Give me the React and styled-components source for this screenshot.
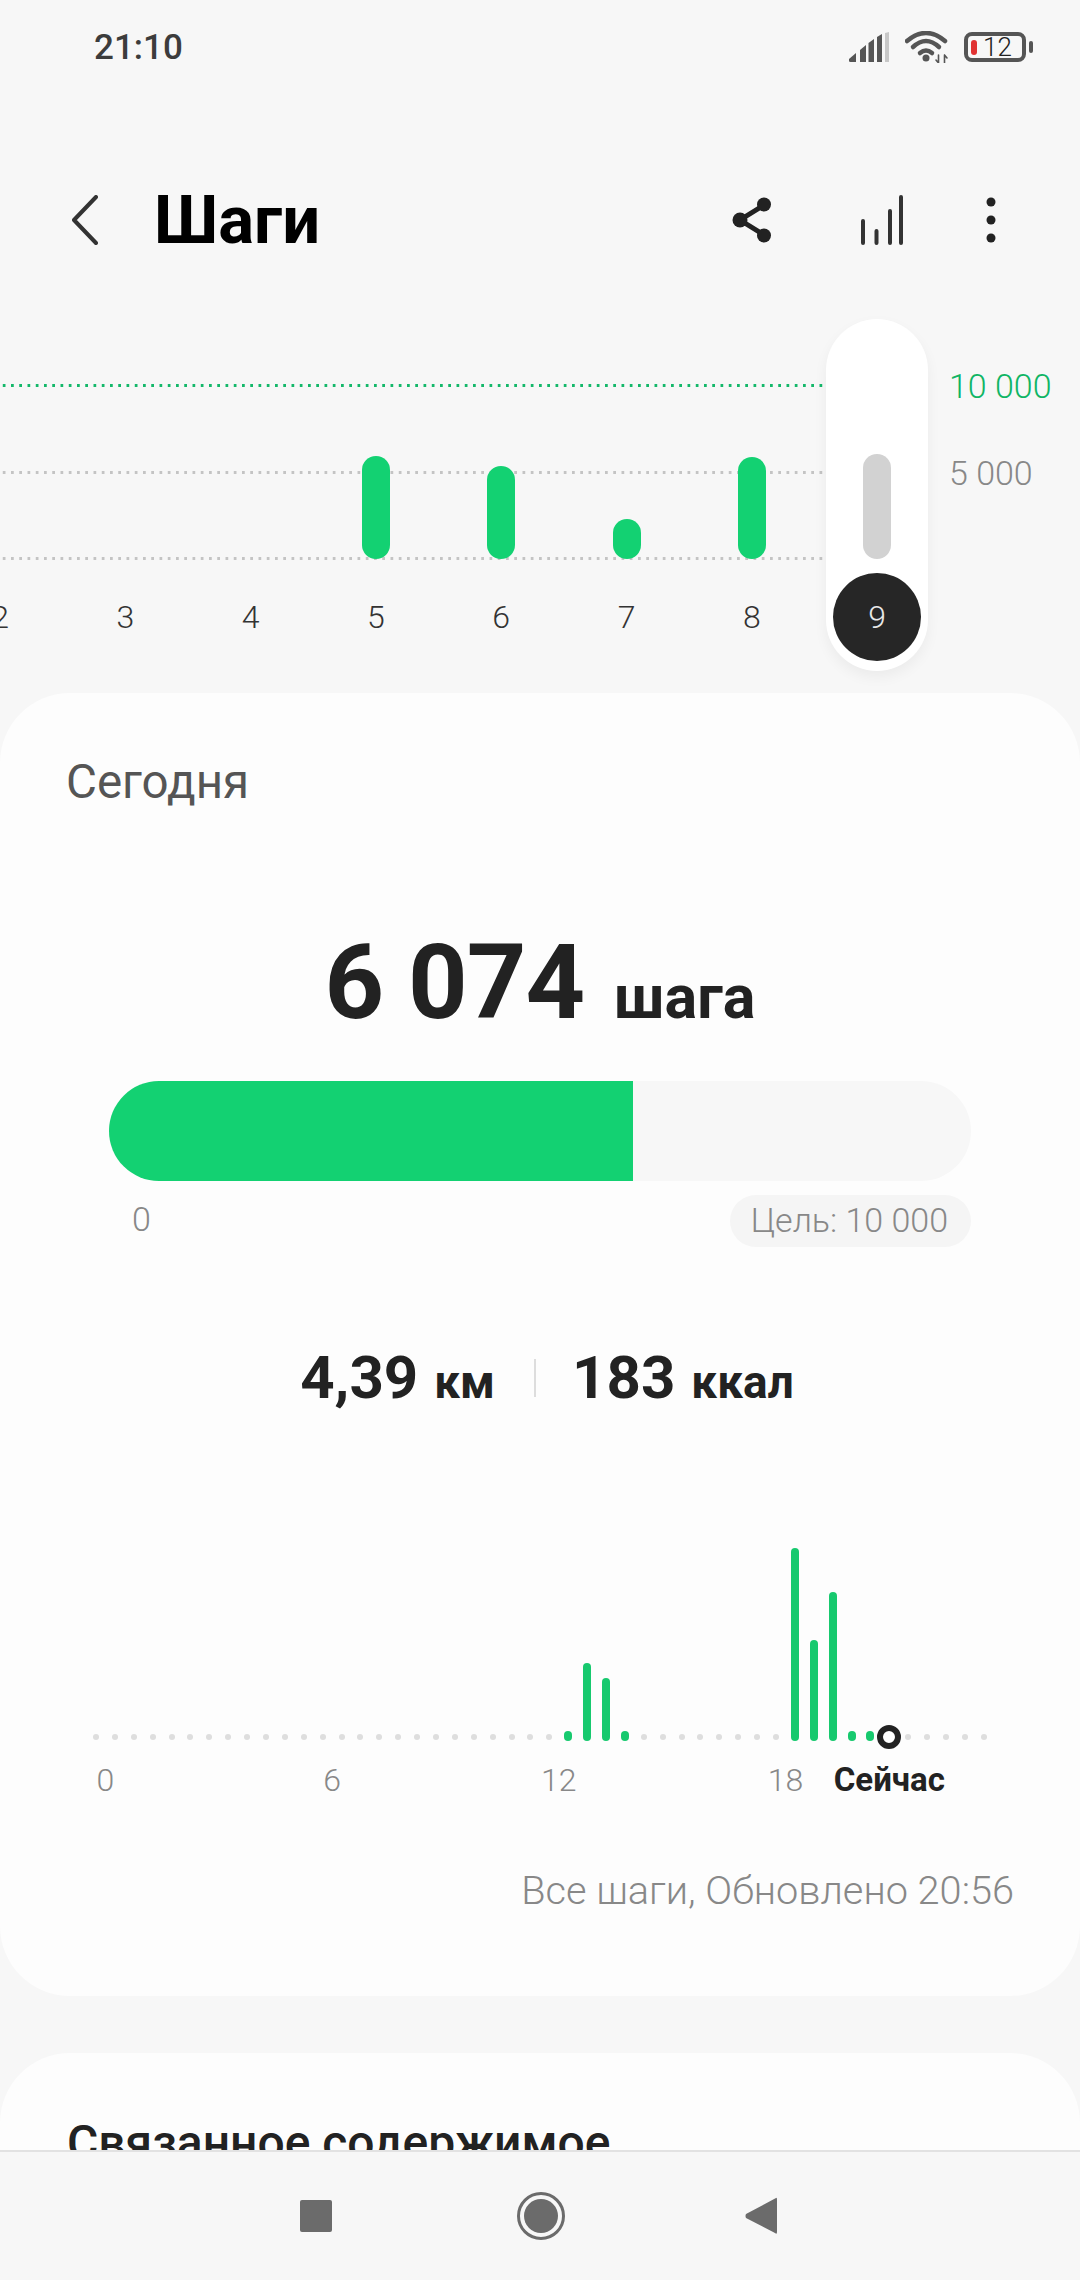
import React from "react";
import styled, { createGlobalStyle } from "styled-components";

const GlobalStyle = createGlobalStyle`
  html, body {
    margin: 0;
    padding: 0;
    background: #f7f7f7;
    font-family: Roboto, "Noto Sans", sans-serif;
  }
  * { box-sizing: border-box; }
`;

const Page = styled.div`
  position: relative;
  width: 1080px;
  height: 2280px;
  overflow: hidden;
  background: #f7f7f7;
  color: #222;
`;

const StatusBar = styled.div`
  height: 94px;
  display: flex;
  align-items: center;
  padding: 0 48px 0 94px;
`;
const Time = styled.div`
  font-size: 35px;
  font-weight: 500;
  color: #3c3c3c;
`;
const StatusIcons = styled.div`
  margin-left: auto;
  display: flex;
  align-items: center;
  gap: 16px;
`;
const Battery = styled.div`
  position: relative;
  width: 62px;
  height: 30px;
  margin-left: -1px;
  border: 4px solid #555;
  border-radius: 8px;
  display: flex;
  align-items: center;
  padding-left: 3px;
  font-size: 26px;
  font-weight: 300;
  line-height: 1;
  color: #222;
  margin-right: 6px;
  &::after {
    content: "";
    position: absolute;
    right: -11px;
    top: 5px;
    width: 4px;
    height: 12px;
    border-radius: 2px;
    background: #555;
  }
`;
const BatteryLevel = styled.span`
  width: 6px;
  height: 15px;
  border-radius: 3px;
  background: #e03232;
  margin-right: 6px;
`;

const Header = styled.div`
  margin-top: 63px;
  height: 126px;
  display: flex;
  align-items: center;
  padding: 0 84px 0 72px;
`;
const Title = styled.h1`
  margin: 0 0 0 56px;
  font-size: 67px;
  font-weight: 700;
  color: #000;
`;
const Actions = styled.div`
  margin-left: auto;
  display: flex;
  align-items: center;
`;
const Action = styled.svg`
  display: block;
  margin-left: ${(p) => p.$gap || 0}px;
`;

const WeekSection = styled.div`
  position: relative;
  height: 410px;
  padding-top: 101px;
`;
const Plot = styled.div`
  display: grid;
  width: 877px;
`;
const GridLines = styled.div`
  grid-area: 1 / 1;
  height: 176px;
  display: flex;
  flex-direction: column;
  justify-content: space-between;
`;
const GridLine = styled.div`
  height: 3px;
  background: radial-gradient(circle at center, ${(p) => (p.$goal ? "#14b86a" : "#c4c4c4")} 1.4px, transparent 1.8px) 0 0 / 8.25px 3px repeat-x;
`;
const Days = styled.div`
  grid-area: 1 / 1;
  display: flex;
  margin-left: -62.6px;
`;
const Day = styled.div`
  width: 125.3px;
  display: flex;
  flex-direction: column;
  align-items: center;
`;
const BarSlot = styled.div`
  height: 175px;
  display: flex;
  align-items: flex-end;
`;
const DayBar = styled.div`
  width: 28px;
  height: ${(p) => p.$h}px;
  border-radius: 14px;
  background: ${(p) => p.$color || "#13d172"};
`;
const DayLabel = styled.div`
  margin-top: 38px;
  font-size: 32px;
  line-height: 40px;
  font-weight: 300;
  color: #333;
`;
const Selected = styled.div`
  position: absolute;
  left: 826px;
  top: 36px;
  width: 102px;
  height: 352px;
  border-radius: 51px;
  background: #fff;
  box-shadow: 0 6px 14px rgba(0, 0, 0, 0.05);
  display: flex;
  flex-direction: column;
  align-items: center;
  justify-content: flex-end;
  padding-bottom: 10px;
`;
const SelectedDay = styled.div`
  width: 88px;
  height: 88px;
  margin-top: 14px;
  border-radius: 50%;
  background: #262626;
  color: #e8e8e8;
  font-size: 32px;
  font-weight: 300;
  display: flex;
  align-items: center;
  justify-content: center;
`;
const Legend = styled.div`
  position: absolute;
  left: 949px;
  top: ${(p) => p.$top}px;
  font-size: 34px;
  line-height: 40px;
  font-weight: 300;
  color: ${(p) => (p.$goal ? "#0fb565" : "#888")};
`;

const Card = styled.div`
  background: #fdfdfd;
  border-radius: 70px;
  margin-bottom: 57px;
  height: ${(p) => p.$h}px;
`;
const CardLabel = styled.div`
  padding: 59px 0 0 66px;
  font-size: 47.5px;
  line-height: 60px;
  color: #555;
`;
const Total = styled.div`
  margin-top: 111px;
  display: flex;
  justify-content: center;
  align-items: baseline;
  line-height: 120px;
`;
const TotalValue = styled.span`
  font-size: 104px;
  font-weight: 700;
  letter-spacing: -1px;
`;
const TotalUnit = styled.span`
  margin-left: 30px;
  font-size: 61px;
  font-weight: 700;
`;
const Progress = styled.div`
  margin: 24px 109px 0;
  height: 100px;
  border-radius: 50px;
  background: #f7f7f7;
  overflow: hidden;
`;
const ProgressFill = styled.div`
  height: 100%;
  background: #13d172;
`;
const ProgressScale = styled.div`
  margin: 14px 109px 0;
  display: flex;
  justify-content: space-between;
  align-items: center;
  padding-left: 23px;
  font-size: 34px;
  font-weight: 300;
  color: #888;
`;
const ScaleStart = styled.span`
  margin-bottom: 4px;
`;
const Goal = styled.div`
  height: 52px;
  padding: 0 23px 3px 21px;
  border-radius: 26px;
  background: #f5f5f5;
  display: flex;
  align-items: center;
`;
const Stats = styled.div`
  margin-top: 95px;
  padding-left: 14px;
  display: flex;
  justify-content: center;
  align-items: center;
`;
const Stat = styled.div`
  display: flex;
  align-items: baseline;
  gap: 16px;
  font-weight: 700;
`;
const StatValue = styled.span`
  font-size: 60px;
`;
const StatUnit = styled.span`
  font-size: 46px;
`;
const StatDivider = styled.div`
  width: 2px;
  height: 38px;
  margin: 0 36px 0 39px;
  background: #ddd;
`;

const Hours = styled.div`
  margin: 134px 0 0 86.5px;
  width: 907.2px;
`;
const HourRow = styled.div`
  display: flex;
  align-items: flex-end;
  height: 194px;
`;
const HourSlot = styled.div`
  width: 18.9px;
  display: flex;
  justify-content: center;
  align-items: flex-end;
`;
const HourDot = styled.div`
  width: 6px;
  height: 6px;
  margin-bottom: 1px;
  border-radius: 50%;
  background: #dedede;
`;
const HourBar = styled.div`
  width: 8px;
  height: ${(p) => p.$h}px;
  border-radius: 4px;
  background: #17c96e;
`;
const NowMark = styled.div`
  flex: none;
  width: 24px;
  height: 24px;
  margin-bottom: -8px;
  border: 6px solid #222;
  border-radius: 50%;
  background: #fff;
`;
const HourLabels = styled.div`
  margin-top: 16px;
  display: grid;
  grid-template-columns: repeat(48, 18.9px);
`;
const HourLabel = styled.div`
  grid-column: ${(p) => p.$col + 1} / span ${(p) => p.$span || 2};
  grid-row: 1;
  justify-self: center;
  white-space: nowrap;
  font-size: ${(p) => (p.$now ? 33 : 32)}px;
  line-height: 46px;
  font-weight: ${(p) => (p.$now ? 700 : 300)};
  color: ${(p) => (p.$now ? "#222" : "#888")};
`;
const Updated = styled.div`
  margin-top: 64px;
  padding-right: 66px;
  text-align: right;
  font-size: 39.7px;
  line-height: 48px;
  font-weight: 300;
  color: #888;
`;
const CardTitle = styled.div`
  padding: 62px 0 0 67px;
  font-size: 48px;
  line-height: 56px;
  font-weight: 500;
  color: #222;
`;

const NavBar = styled.div`
  position: absolute;
  left: 0;
  right: 0;
  bottom: 0;
  height: 130px;
  border-top: 2px solid #e2e2e2;
  background: #f7f7f7;
  display: flex;
  align-items: center;
  padding-left: 300px;
`;
const NavIcon = styled.svg`
  display: block;
  margin-left: ${(p) => p.$gap || 0}px;
`;

const days = [
  { label: 2, h: 0 },
  { label: 3, h: 0 },
  { label: 4, h: 0 },
  { label: 5, h: 103 },
  { label: 6, h: 93 },
  { label: 7, h: 40 },
  { label: 8, h: 102 },
];

// index of half hour -> bar height, 10 is a green dot
const hourBars = { 25: 10, 26: 78, 27: 63, 28: 10, 37: 193, 38: 101, 39: 149, 40: 10, 41: 10 };
const NOW = 42;

function SignalIcon() {
  return (
    <svg width="40" height="30" viewBox="0 0 40 30">
      <path d="M0 27 L7 21 V30 H1.5 Q0 30 0 29 Z" fill="#555" />
      <path d="M11 18 L17 13 V30 H11 Z" fill="#555" />
      <path d="M19.5 11 L25 7 V30 H19.5 Z" fill="#555" />
      <path d="M28 5 L33 2 V30 H28 Z" fill="#555" />
      <path d="M36 1 L40 0 V30 H36 Z" fill="#c8c8c8" />
    </svg>
  );
}

function WifiIcon() {
  return (
    <svg width="44" height="32" viewBox="0 0 44 32" fill="none" stroke="#555" strokeWidth="4.5" strokeLinecap="round">
      <path d="M2 10 Q21 -6 40 10" />
      <path d="M8 16 Q21 4 34 16" />
      <path d="M15 22 Q21 17 27 22" />
      <circle cx="21" cy="27" r="3.5" fill="#555" stroke="none" />
      <path d="M33.5 24 V32 M31 29 L33.5 32 M39.5 32 V24 M39.5 24 L42 27" strokeWidth="1.6" />
    </svg>
  );
}

function ShareIcon() {
  return (
    <Action width="40" height="46" viewBox="0 0 40 46">
      <path d="M32 8 L8 23 L32 38" fill="none" stroke="#222" strokeWidth="5" />
      <circle cx="8" cy="23" r="7.5" fill="#222" />
      <circle cx="32" cy="7.5" r="7" fill="#222" />
      <circle cx="32" cy="38.5" r="7" fill="#222" />
    </Action>
  );
}

function BarsIcon() {
  return (
    <Action $gap={89} width="42" height="50" viewBox="0 0 42 50" fill="none" stroke="#333" strokeWidth="4" strokeLinecap="round">
      <path d="M2 26 V48 M15.5 36 V48 M29 16 V48 M40 2 V48" />
    </Action>
  );
}

function MoreIcon() {
  return (
    <Action $gap={83} width="10" height="46" viewBox="0 0 10 46" fill="#222">
      <circle cx="5" cy="5" r="4.5" />
      <circle cx="5" cy="23" r="4.5" />
      <circle cx="5" cy="41" r="4.5" />
    </Action>
  );
}

export default function App() {
  const slots = Array.from({ length: 48 }, (_, i) => i);
  return (
    <Page>
      <GlobalStyle />
      <StatusBar>
        <Time>21:10</Time>
        <StatusIcons>
          <SignalIcon />
          <WifiIcon />
          <Battery>
            <BatteryLevel />
            12
          </Battery>
        </StatusIcons>
      </StatusBar>

      <Header>
        <svg width="26" height="50" viewBox="0 0 26 50" fill="none" stroke="#333" strokeWidth="4" strokeLinecap="round" strokeLinejoin="round">
          <path d="M24 2 L2 25 L24 48" />
        </svg>
        <Title>Шаги</Title>
        <Actions>
          <ShareIcon />
          <BarsIcon />
          <MoreIcon />
        </Actions>
      </Header>

      <WeekSection>
        <Plot>
          <GridLines>
            <GridLine $goal />
            <GridLine />
            <GridLine />
          </GridLines>
          <Days>
            {days.map((d) => (
              <Day key={d.label}>
                <BarSlot>{d.h > 0 && <DayBar $h={d.h} />}</BarSlot>
                <DayLabel>{d.label}</DayLabel>
              </Day>
            ))}
          </Days>
        </Plot>
        <Selected>
          <DayBar $h={105} $color="#d2d2d2" />
          <SelectedDay>9</SelectedDay>
        </Selected>
        <Legend $goal $top={83}>10 000</Legend>
        <Legend $top={170}>5 000</Legend>
      </WeekSection>

      <Card $h={1303}>
        <CardLabel>Сегодня</CardLabel>
        <Total>
          <TotalValue>6 074</TotalValue>
          <TotalUnit>шага</TotalUnit>
        </Total>
        <Progress>
          <ProgressFill style={{ width: `${(6074 / 10000) * 100}%` }} />
        </Progress>
        <ProgressScale>
          <ScaleStart>0</ScaleStart>
          <Goal>Цель: 10 000</Goal>
        </ProgressScale>
        <Stats>
          <Stat>
            <StatValue>4,39</StatValue>
            <StatUnit>км</StatUnit>
          </Stat>
          <StatDivider />
          <Stat>
            <StatValue>183</StatValue>
            <StatUnit>ккал</StatUnit>
          </Stat>
        </Stats>
        <Hours>
          <HourRow>
            {slots.map((i) => (
              <HourSlot key={i}>
                {i === NOW ? <NowMark /> : hourBars[i] ? <HourBar $h={hourBars[i]} /> : <HourDot />}
              </HourSlot>
            ))}
          </HourRow>
          <HourLabels>
            <HourLabel $col={0}>0</HourLabel>
            <HourLabel $col={12}>6</HourLabel>
            <HourLabel $col={24}>12</HourLabel>
            <HourLabel $col={36}>18</HourLabel>
            <HourLabel $col={NOW} $span={1} $now>Сейчас</HourLabel>
          </HourLabels>
        </Hours>
        <Updated>Все шаги, Обновлено 20:56</Updated>
      </Card>

      <Card $h={400}>
        <CardTitle>Связанное содержимое</CardTitle>
      </Card>

      <NavBar>
        <NavIcon width="32" height="32" viewBox="0 0 32 32">
          <rect width="32" height="32" rx="2" fill="#6b6b6b" />
        </NavIcon>
        <NavIcon $gap={185} width="48" height="48" viewBox="0 0 48 48">
          <circle cx="24" cy="24" r="22.5" fill="none" stroke="#6b6b6b" strokeWidth="3" />
          <circle cx="24" cy="24" r="17" fill="#6b6b6b" />
        </NavIcon>
        <NavIcon $gap={180} width="32" height="38" viewBox="0 0 32 38">
          <path d="M31 1 Q32 0 32 3 V35 Q32 38 30 36 L1 21 Q0 19 1 17 Z" fill="#6b6b6b" />
        </NavIcon>
      </NavBar>
    </Page>
  );
}
